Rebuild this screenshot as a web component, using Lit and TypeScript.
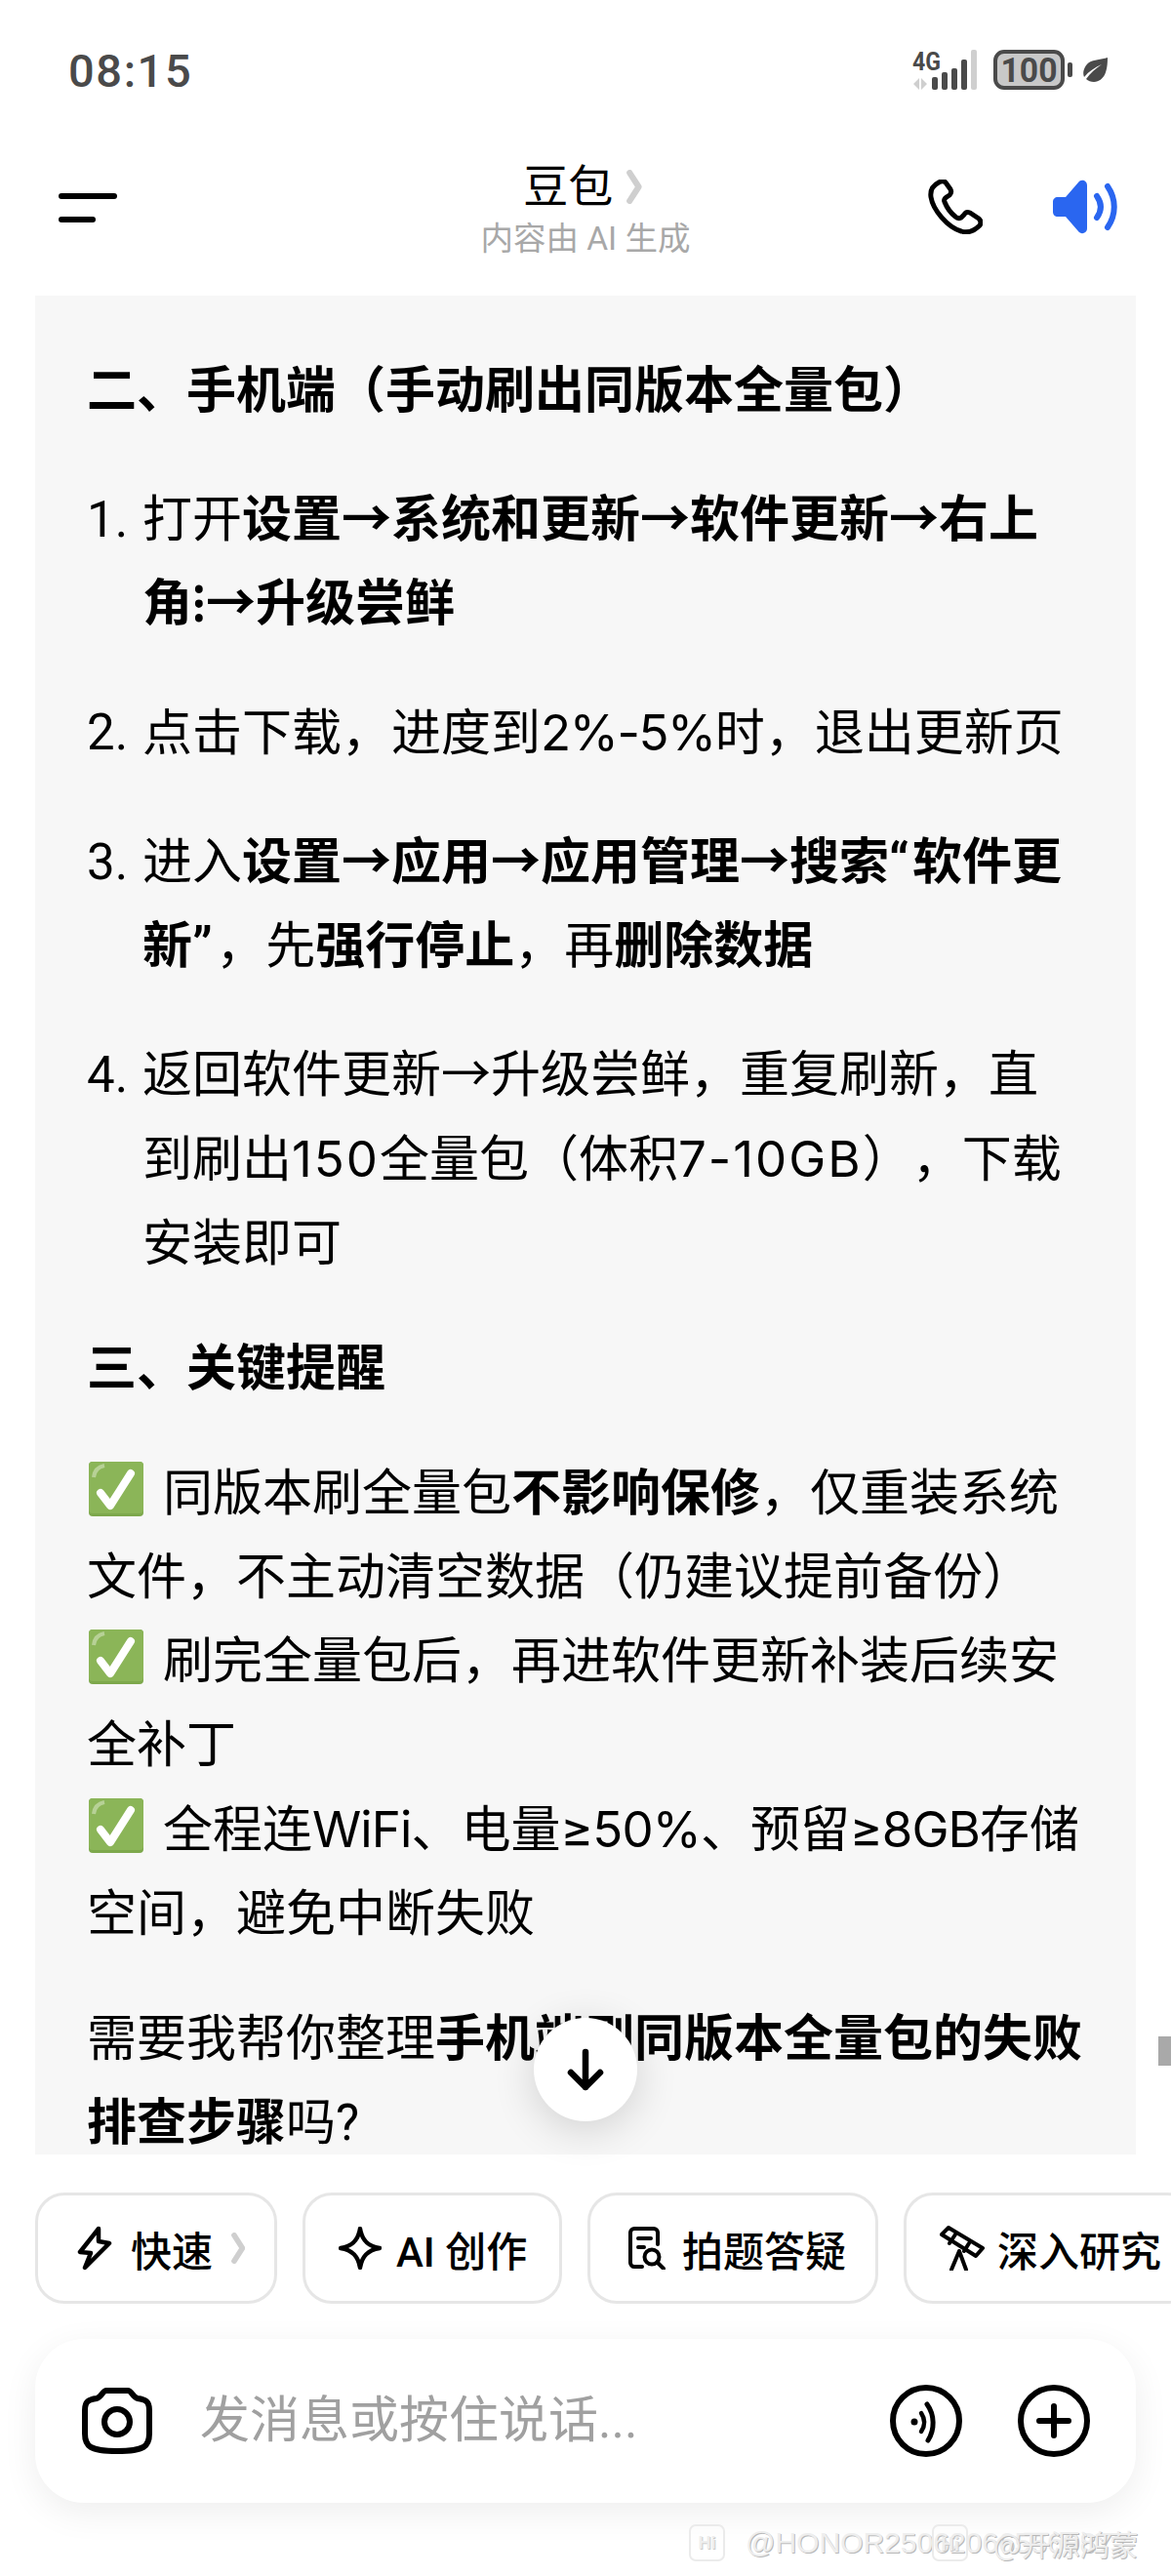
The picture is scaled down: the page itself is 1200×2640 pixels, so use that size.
import { LitElement, html, css } from "lit";
import { customElement } from "lit/decorators.js";

const check = html`<svg class="emoji" viewBox="0 0 56 56"><rect width="56" height="56" rx="4" fill="#7da84c"/><rect width="56" height="53" rx="4" fill="#8bb558"/><path d="M5 16q1-10 11-12" stroke="#b7d196" stroke-width="4" fill="none"/><path d="M12 32l10 13L43 12" stroke="#fff" stroke-width="8" stroke-linecap="round" stroke-linejoin="round" fill="none"/></svg>`;

@customElement("app-root")
export class AppRoot extends LitElement {
  static styles = css`
    :host { display: block; width: 1200px; height: 2640px; background: #fff; position: relative; overflow: hidden; font-family: Roboto, "Noto Sans CJK SC", sans-serif; color: #000; text-spacing-trim: space-all; }
    .status { height: 146px; box-sizing: border-box; padding: 51px 64px 0 70px; display: flex; justify-content: space-between; }
    .time { font: 500 47px/44px Roboto, sans-serif; color: #4a4a4a; letter-spacing: 1.6px; }
    .sysicons { width: 201px; height: 42px; }
    .nav { height: 157px; position: relative; display: flex; align-items: flex-start; justify-content: space-between; padding: 0 54px 0 60px; box-sizing: border-box; }
    .menu { width: 60px; padding-top: 52px; display: flex; flex-direction: column; gap: 18px; }
    .menu i { display: block; height: 6px; border-radius: 3px; background: #000; }
    .menu i:last-child { width: 38px; }
    .title { position: absolute; left: 0; right: 0; top: 20px; text-align: center; }
    .t1 { display: flex; justify-content: center; align-items: center; gap: 14px; font-size: 46px; line-height: 50px; padding-right: 6px; }
    .t2 { font-size: 33.5px; line-height: 40px; color: #a8a8a8; margin-top: 9px; }
    .navr { display: flex; gap: 71px; padding-top: 38px; }
    .panel { margin: 0 36px; height: 1905px; background: #f7f7f7; box-sizing: border-box; padding: 55px 50px 0 53px; font-size: 51px; line-height: 86px; overflow: hidden; position: relative; }
    .panel p { margin: 0 0 42px; }
    .panel p.first { margin-bottom: 46px; }
    .panel b { font-weight: 700; }
    .l { font-family: Inter, sans-serif; letter-spacing: -0.9px; }
    .l.pct { letter-spacing: -1.4px; }
    .l.wide { letter-spacing: 2px; }
    .q { letter-spacing: 3.4px; }
    .li { display: flex; margin: 0 0 46px; }
    .li.last { margin-bottom: 42px; }
    .li span.n { width: 57px; flex: none; }
    .emoji { width: 56px; height: 56px; vertical-align: -6px; margin: 0 20px 0 2px; }
    .chips { display: flex; gap: 26px; margin: 39px 0 0 36px; width: 1300px; }
    .chip { height: 114px; box-sizing: border-box; border: 3px solid #e6e6e6; border-radius: 30px; display: flex; align-items: center; font-size: 42px; font-weight: 500; flex: none; }
    .c1 { width: 248px; padding-left: 40px; gap: 19px; }
    .c2 { width: 266px; padding-left: 34px; gap: 15px; }
    .c3 { width: 298px; padding-left: 39px; gap: 17px; }
    .c4 { width: 300px; padding-left: 34px; gap: 13px; }
    .input { margin: 36px 36px 0; height: 168px; border-radius: 50px; background: #fff; box-shadow: 0 10px 36px rgba(0,0,0,.07); display: flex; align-items: center; padding: 0 47px 0 48px; box-sizing: border-box; }
    .ph { flex: 1; font-size: 51px; color: #a0a0a0; margin-left: 49px; line-height: 60px; }
    .ibtn { display: flex; gap: 57px; }
    .down { position: absolute; left: 547px; top: 2068px; width: 106px; height: 106px; border-radius: 50%; background: #fff; box-shadow: 0 8px 44px rgba(0,0,0,.16); display: flex; align-items: center; justify-content: center; }
    .bar { position: absolute; left: 1187px; top: 2087px; width: 13px; height: 30px; background: #a9a9a9; }
    .wm { position: absolute; left: 706px; top: 2587px; display: flex; align-items: center; color: #eeeeee; font: 30px/38px "Liberation Sans", sans-serif; text-shadow: 1px 1px 0 #b8b8b8; white-space: nowrap; }
    .wmi { display: block; width: 33px; height: 34px; border: 2px solid #ebebeb; border-radius: 7px; margin-right: 21px; font-size: 18px; font-weight: 700; line-height: 34px; text-align: center; text-shadow: 1px 1px 0 #ccc; }
    .wm2 { left: 955px; font-family: "Noto Sans CJK SC", sans-serif; }
    .wm2 .wmi { margin-right: 26px; }
  `;

  sys() {
    return html`<svg class="sysicons" viewBox="0 0 201 42" fill="#4a4a4a">
      <text x="0" y="21" font-family="Roboto" font-size="25" font-weight="700" textLength="29" lengthAdjust="spacingAndGlyphs">4G</text>
      <path d="M7 29v12L1 35zM9 29v12l6-6z" fill="#cfcfcf"/>
      <rect x="20" y="28" width="6" height="13" rx="2"/><rect x="30" y="23" width="6" height="18" rx="2"/><rect x="40" y="19" width="6" height="22" rx="2"/><rect x="50" y="10" width="6" height="31" rx="2"/><rect x="60" y="0" width="6" height="41" rx="2" fill="#cfcfcf"/>
      <rect x="85" y="2" width="69" height="37" rx="9" fill="#c8c8c8" stroke="#4a4a4a" stroke-width="4"/>
      <text x="119.5" y="33" text-anchor="middle" font-family="Roboto" font-size="35" font-weight="700" textLength="58" lengthAdjust="spacingAndGlyphs">100</text>
      <rect x="159" y="13" width="5" height="15" rx="2"/>
      <path d="M200 8c0 14-3 24-14 25-3 0-6-1-8-3 4-6 10-11 16-15-7 3-13 7-18 13-2-5 0-11 5-15 5-3 12-3 19-5z"/>
    </svg>`;
  }

  render() {
    const chev = (h: number, c = "#cfcfcf") => html`<svg width="${h * 0.45}" height="${h}" viewBox="0 0 15 34" fill="none" stroke="${c}" stroke-width="6" stroke-linecap="round" stroke-linejoin="round"><path d="M3 3l9 14-9 14"/></svg>`;
    return html`
      <div class="status"><div class="time">08:15</div>${this.sys()}</div>
      <div class="nav">
        <div class="menu"><i></i><i></i></div>
        <div class="title">
          <div class="t1"><span>豆包</span>${chev(35)}</div>
          <div class="t2">内容由 AI 生成</div>
        </div>
        <div class="navr">
          <svg width="56" height="56" viewBox="0 0 56 56" fill="none" stroke="#000" stroke-width="5" stroke-linejoin="round"><path d="M11 3c-6 3-9 8-8 15 2 13 17 31 31 35 6 2 13 0 19-6 2-3 1-5-1-7l-9-6c-3-1-5 0-6 2l-3 3c-2 1-4 1-6-1-5-4-9-10-11-15-1-2 0-4 2-5l3-2c2-2 2-4 1-6l-5-7c-2-2-4-2-7 0z"/></svg>
          <svg width="68" height="56" viewBox="0 0 68 56" fill="#2a66f0"><path d="M27 3c3-4 9-2 9 3v44c0 5-6 7-9 3L14 38H6c-3 0-5-2-5-5V23c0-3 2-5 5-5h8z"/><g fill="none" stroke="#2a66f0" stroke-width="6" stroke-linecap="round"><path d="M46 17c5 7 5 15 0 22"/><path d="M57 7c9 13 9 29 0 42"/></g></svg>
        </div>
      </div>
      <div class="panel">
        <p class="first"><b>二、手机端（手动刷出同版本全量包）</b></p>
        <div class="li"><span class="n">1.</span><span>打开<b>设置→系统和更新→软件更新→右上角⁝→升级尝鲜</b></span></div>
        <div class="li"><span class="n">2.</span><span>点击下载，进度到<span class="l pct">2%-5%</span>时，退出更新页</span></div>
        <div class="li"><span class="n">3.</span><span>进入<b>设置→应用→应用管理→搜索<span class="q">“</span>软件更新<span class="q">”</span></b>，先<b>强行停止</b>，再<b>删除数据</b></span></div>
        <div class="li last"><span class="n">4.</span><span>返回软件更新→升级尝鲜，重复刷新，直到刷出<span class="l wide">150</span>全量包（体积<span class="l wide">7-10GB</span>），下载安装即可</span></div>
        <p><b>三、关键提醒</b></p>
        <p>${check}同版本刷全量包<b>不影响保修</b>，仅重装系统文件，不主动清空数据（仍建议提前备份）<br>${check}刷完全量包后，再进软件更新补装后续安全补丁<br>${check}全程连<span class="l">WiFi</span>、电量<span class="l">≥50%</span>、预留<span class="l">≥8GB</span>存储空间，避免中断失败</p>
        <p>需要我帮你整理<b>手机端刷同版本全量包的失败排查步骤</b>吗?</p>
      </div>
      <div class="chips">
        <div class="chip c1"><svg width="36" height="46" viewBox="0 0 36 46" fill="none" stroke="#000" stroke-width="4.5" stroke-linejoin="round"><path d="M22 3L3 27l11 1-6 15 25-25-11-2z"/></svg><span>快速</span>${chev(32)}</div>
        <div class="chip c2"><svg width="44" height="44" viewBox="0 0 44 44" fill="none" stroke="#000" stroke-width="4.5" stroke-linejoin="round"><path d="M22 2c2 12 8 18 20 20-12 2-18 8-20 20-2-12-8-18-20-20 12-2 18-8 20-20z"/></svg><span>AI 创作</span></div>
        <div class="chip c3"><svg width="38" height="44" viewBox="0 0 38 44" fill="none" stroke="#000" stroke-width="4" stroke-linecap="round"><path d="M14 41H6c-2 0-4-2-4-4V6c0-2 2-4 4-4h20c2 0 4 2 4 4v12"/><path d="M10 12h13M10 21h6"/><circle cx="24" cy="31" r="7.500"/><path d="M30 37l6 6"/></svg><span>拍题答疑</span></div>
        <div class="chip c4"><svg width="46" height="46" viewBox="0 0 46 46" fill="none" stroke="#000" stroke-width="4" stroke-linecap="round" stroke-linejoin="round"><path d="M2 9l7-7 35 21-7 8zM16 9l-6 9M30 18l-5 8"/><path d="M20 26L12 45M20 26l7 19"/></svg><span>深入研究</span></div>
      </div>
      <div class="input">
        <svg width="72" height="68" viewBox="0 0 72 68" fill="none" stroke="#000" stroke-width="6"><path d="M25 3h22c4 0 5 7 10 8 8 1 12 3 12 12v24c0 13-5 18-33 18S3 60 3 47V23c0-9 4-11 12-12 5-1 6-8 10-8z"/><circle cx="36" cy="35" r="13"/></svg>
        <div class="ph">发消息或按住说话...</div>
        <div class="ibtn">
          <svg width="74" height="74" viewBox="0 0 74 74" fill="none" stroke="#000" stroke-width="6" stroke-linecap="round"><circle cx="37" cy="37" r="34"/><circle cx="25" cy="38" r="3.500" fill="#000" stroke="none"/><path d="M32 29c4 6 4 13 0 19" stroke-width="4.500"/><path d="M38 20c8 11 8 26 1 37" stroke-width="5"/></svg>
          <svg width="74" height="74" viewBox="0 0 74 74" fill="none" stroke="#000" stroke-width="6" stroke-linecap="round"><circle cx="37" cy="37" r="34"/><path d="M37 22v30M22 37h30"/></svg>
        </div>
      </div>
      <div class="down"><svg width="44" height="44" viewBox="0 0 44 44" fill="none" stroke="#000" stroke-width="6.500" stroke-linecap="round" stroke-linejoin="round"><path d="M22 4v36M7 25l15 15 15-15"/></svg></div>
      <div class="bar"></div>
      <div class="wm"><span class="wmi">Hi</span><span>@HONOR250620665569877</span></div>
      <div class="wm wm2"><span class="wmi">Hi</span><span>@开源鸿蒙</span></div>
    `;
  }
}
